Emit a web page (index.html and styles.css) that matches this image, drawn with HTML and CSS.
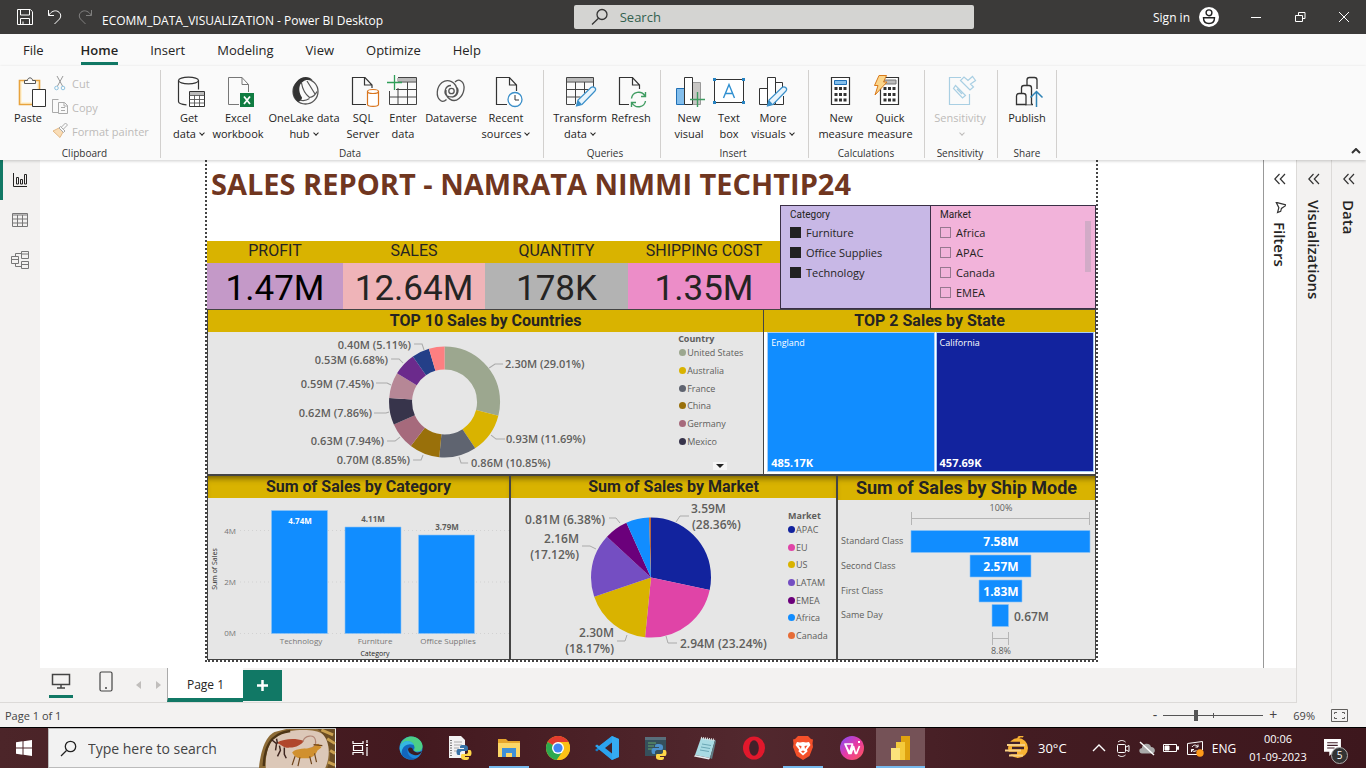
FILE: index.html
```html
<!DOCTYPE html>
<html lang="en">
<head>
<meta charset="utf-8">
<title>ECOMM_DATA_VISUALIZATION - Power BI Desktop</title>
<link rel="stylesheet" href="styles.css">
</head>
<body>
<header class="titlebar">
  <div class="title-left">
    <button class="tb-btn" aria-label="Save"><svg width="16" height="16" viewBox="0 0 16 16"><path d="M.5.500h12.800L15.500 2.700V15.500H.5zM3.500.500V6h9V.500M3.500 15.500V9.500h9v6M6 12.500v3"/></svg></button>
    <button class="tb-btn" aria-label="Undo"><svg width="16" height="16" viewBox="0 0 16 16"><path d="M1.500 1v5.500H7M1.700 6.300C4 2.500 8 .8 11 2.500c3 1.800 3.500 5 1.500 7.500L7.500 15"/></svg></button>
    <button class="tb-btn dim" aria-label="Redo"><svg width="16" height="16" viewBox="0 0 16 16"><path d="M14.500 1v5.500H9M14.300 6.300C12 2.500 8 .8 5 2.500c-3 1.800-3.500 5-1.500 7.500L8.500 15"/></svg></button>
    <span class="title-text">ECOMM_DATA_VISUALIZATION - Power BI Desktop</span>
  </div>
  <label class="title-search">
    <svg width="18" height="18" viewBox="0 0 18 18"><circle cx="11" cy="6.500" r="5"/><path d="M7.500 10.300 1 16.500"/></svg>
    <input type="text" placeholder="Search" aria-label="Search">
  </label>
  <div class="title-right">
    <button class="signin">Sign in
      <svg width="20" height="20" viewBox="0 0 20 20"><circle cx="10" cy="10" r="10" fill="#fff"/><g fill="none" stroke="#222" stroke-width="1.400"><circle cx="10" cy="5.800" r="2.900"/><path d="M4.500 10.700h11c0 3.800-2 5.800-5.500 5.800s-5.500-2-5.500-5.800z"/></g></svg>
    </button>
    <button class="win-btn" aria-label="Minimize"><svg width="12" height="12" viewBox="0 0 12 12"><path d="M1 6.500h10"/></svg></button>
    <button class="win-btn" aria-label="Restore"><svg width="12" height="12" viewBox="0 0 12 12"><path d="M1.500 4.500h7v6h-7zM4.500 4V1.500h6.500v6H9"/></svg></button>
    <button class="win-btn" aria-label="Close"><svg width="12" height="12" viewBox="0 0 12 12"><path d="M1 1l10 10M11 1 1 11"/></svg></button>
  </div>
</header>

<nav class="tabs">
  <a href="#" class="first">File</a><a href="#" class="active">Home</a><a href="#">Insert</a><a href="#">Modeling</a><a href="#">View</a><a href="#">Optimize</a><a href="#">Help</a>
</nav>

<section class="ribbon">
  <div class="group g-clip">
    <div class="tools">
      <button class="tool w40"><svg viewBox="10 75 32 32"><path d="M17.500 80.500h20v24h-20z" fill="#fff3d6" stroke="#e8a33d" stroke-width="1.600"/><path d="M20 83h15v19H20z" fill="#fafafa"/><path d="M22.500 83.500v-3h3c0-3.500 5-3.500 5 0h3v3z" fill="#fafafa" stroke="#555"/><path d="M30.500 89.500h13v17h-13z" fill="#fff" stroke="#333"/></svg><span>Paste</span></button>
      <div class="clip-list">
        <button disabled><svg viewBox="52 75 16 16"><g fill="none"><path d="M57 76l5.500 10M63 76l-5.500 10" stroke="#999"/><circle cx="56.500" cy="88" r="1.800" stroke="#8fc3e0"/><circle cx="63" cy="88" r="1.800" stroke="#8fc3e0"/></g></svg>Cut</button>
        <button disabled><svg viewBox="52 99 16 16"><g fill="#fafafa" stroke="#aaa"><path d="M56 99.500h-3.500v13H58M52.500 99.500h6"/><path d="M58.500 102.500h6l3 3v8h-9zM64 102.500v3.500h3.500M61 107.500h4M61 110.500h4"/></g></svg>Copy</button>
        <button disabled><svg viewBox="52 122 16 16"><g fill="#fafafa"><path d="M53 130l6-3 4 4-3 5.500z" fill="#f9ddb7" stroke="#e5b985"/><path d="M59 127l1.500-1.500 4.500 4.500-1.500 1.500zM61.500 126l4-4 2 2-4 4" stroke="#aaa"/></g></svg>Format painter</button>
      </div>
    </div>
    <div class="glabel">Clipboard</div>
  </div>
  <div class="group g-data">
    <div class="tools">
      <button class="tool w40"><svg viewBox="173 75 32 32"><g fill="none" stroke="#333" stroke-width="1.200"><ellipse cx="188.500" cy="80.500" rx="10" ry="3.300"/><path d="M178.500 80.500v21c0 2 4 3 8 3.300M198.500 80.500v9"/></g><path d="M189.500 91.500h15v15h-15z" fill="#fff" stroke="#333"/><path d="M190 92h14v3h-14z" fill="#bbb"/><path d="M189.500 95.500h15M189.500 99.500h15M189.500 103h15M194.500 95v11M199.500 95v11" stroke="#555" stroke-width=".9"/></svg><span>Get<br>data<i class="chev"></i></span></button>
      <button class="tool w58"><svg viewBox="222 75 32 32"><path d="M239 104.500h-10.500v-27H242l6.500 7V92M242 77.500v7h6.500" fill="none" stroke="#777"/><path d="M240 93h14v14h-14z" fill="#107c41"/><path d="M244 96.500l6 7.500M250 96.500l-6 7.500" stroke="#fff" stroke-width="1.800"/></svg><span>Excel<br>workbook</span></button>
      <button class="tool w74"><svg viewBox="288 75 32 32"><circle cx="305.500" cy="91.500" r="12.500" fill="#fafafa" stroke="#555" stroke-width="1.300"/><path d="M296.500 82c4-6 12.500-6.500 16-2-5.500-1-9 0-12 4-2 4-1.500 9 1.500 13.500 0 2-1.500 4-4 4.500-6-5-6.500-14-1.500-20z" fill="#333"/><path d="M301.500 83c1 6 3.500 11 8 14.500 3.500-.5 6-3 7.500-6M309.500 98.500c-3 2-6.500 2.500-9.500 1.500M307 81l8 13" fill="none" stroke="#555" stroke-width="1.200"/></svg><span>OneLake data<br>hub<i class="chev"></i></span></button>
      <button class="tool w44"><svg viewBox="347 75 32 32"><path d="M366 104.500h-13.500v-27H365l7 7.500V88M364.500 77.500V85h7.500" fill="none" stroke="#333" stroke-width="1.200"/><g fill="#fff" stroke="#d9751e" stroke-width="1.200"><path d="M367.500 91.500v13c0 2.500 11 2.500 11 0v-13"/><ellipse cx="373" cy="91.500" rx="5.500" ry="2"/></g></svg><span>SQL<br>Server</span></button>
      <button class="tool w36"><svg viewBox="387 75 32 32"><path d="M397 78h19v3.500h-19z" fill="#bbb"/><path d="M398 77.500h18.500v27h-27V91M398 82h18.500M396 89.500h20.500M389.500 97h27M398 88v16.500M407.500 82v22.500" fill="none" stroke="#444"/><path d="M394.500 75v15M387 82.500h15" stroke="#2f9e58" stroke-width="1.300"/></svg><span>Enter<br>data</span></button>
      <button class="tool w60"><svg viewBox="435 75 32 32"><g fill="none" stroke="#555" stroke-width="1.300"><circle cx="451.500" cy="91" r="2.700"/><path d="M451 85.500c-6 0-8 8-3.500 10.500 5 2.500 10-.5 9.500-6-.8-8-9-12-15-7.500-5.500 4.500-6.500 14-1.500 18 2 1.500 4.500.5 6-1M452 97c6 0 8-8 3.500-10.500M446 90c-1 8 7 13.500 13 8.500 5.500-4.500 7-14 2-17.500-2-1.500-4.500-.5-6 1"/></g></svg><span>Dataverse<br>&nbsp;</span></button>
      <button class="tool w50"><svg viewBox="490 75 32 32"><path d="M507 104.500h-10.500v-27h13l7 7.500V91M509.500 77.500V85h7" fill="none" stroke="#333" stroke-width="1.200"/><circle cx="515" cy="99.500" r="7" fill="#fff" stroke="#3a8fc9" stroke-width="1.300"/><path d="M515 95v5h4" fill="none" stroke="#333"/></svg><span>Recent<br>sources<i class="chev"></i></span></button>
    </div>
    <div class="glabel">Data</div>
  </div>
  <div class="group g-query">
    <div class="tools">
      <button class="tool w52"><svg viewBox="565 75 32 32"><path d="M567.500 77.500h27v4h-27z" fill="#bbb"/><path d="M576 104.500h-8.500v-27h27V88M567.500 82h27M567.500 89.500h22M567.500 97h14M576.500 82v22M585.500 82v11" fill="none" stroke="#444"/><path d="M577.500 106l1.500-6 13-12.500c2.500-2 6 1 4 3.500L583 104.500z" fill="#e8f4fc" stroke="#3a8fc9" stroke-width="1.200"/><path d="M577.500 106l1.500-6 4 4.500z" fill="#3a8fc9"/></svg><span>Transform<br>data<i class="chev"></i></span></button>
      <button class="tool w50"><svg viewBox="615 75 32 32"><path d="M629 104.500h-9.500v-27h13l7 7.500V89M632.500 77.500V85h7" fill="none" stroke="#333" stroke-width="1.200"/><path d="M631.500 98.500c.8-7 10-8.500 13.500-2.500M645.500 92v4.500H641M645.500 101c-1 6.500-10 8-13.500 2M631.500 107v-4.500h4.500" fill="none" stroke="#3f9c61" stroke-width="1.400"/></svg><span>Refresh<br>&nbsp;</span></button>
    </div>
    <div class="glabel">Queries</div>
  </div>
  <div class="group g-insert">
    <div class="tools">
      <button class="tool w40"><svg viewBox="673 75 32 32"><path d="M676.500 88.500h8v16h-8z" fill="#83beec" stroke="#1f6fb5"/><path d="M692.500 82.500h8v22h-8z" fill="#c8c6c4" stroke="#999"/><path d="M684.500 77.500h8v27h-8z" fill="#fff" stroke="#333"/><path d="M697.500 92v15M690 99.500h15" stroke="#3f9c61" stroke-width="1.400"/></svg><span>New<br>visual</span></button>
      <button class="tool w40"><svg viewBox="713 75 32 32"><path d="M714.500 79.500h29v23h-29z" fill="#fff" stroke="#333"/><path d="M713 78h3v3h-3zM742 78h3v3h-3zM713 101h3v3h-3zM742 101h3v3h-3z" fill="#2683c2"/><path d="M723.500 98l5.500-13.500 5.500 13.500M725.500 93.500h7" fill="none" stroke="#2f8fd0" stroke-width="1.400"/></svg><span>Text<br>box</span></button>
      <button class="tool w48"><svg viewBox="759 75 32 32"><path d="M761.500 88.500h8v16h-8zM769.500 77.500h8v27h-8zM777.500 82.500h7v6M777.500 104.500h8V96" fill="#fff" stroke="#333"/><path d="M769.500 106l1.500-6 13-12.500c2.500-2 6 1 4 3.500L775 104.500z" fill="#e8f4fc" stroke="#3a8fc9" stroke-width="1.200"/><path d="M769.500 106l1.500-6 4 4.500z" fill="#3a8fc9"/></svg><span>More<br>visuals<i class="chev"></i></span></button>
    </div>
    <div class="glabel">Insert</div>
  </div>
  <div class="group g-calc">
    <div class="tools">
      <button class="tool w48"><svg viewBox="825 75 32 32"><path d="M831.500 77.500h18v27h-18z" fill="#fff" stroke="#333" stroke-width="1.200"/><path d="M834.500 80.500h12v4h-12z" fill="#83beec" stroke="#1f6fb5"/><path d="M834.500 88.500h12M834.500 94.500h12M834.500 100h12" stroke="#333" stroke-width="3" stroke-dasharray="3 1.500"/></svg><span>New<br>measure</span></button>
      <button class="tool w50"><svg viewBox="874 75 32 32"><path d="M880.500 77.500h18v27h-18z" fill="#fff" stroke="#333" stroke-width="1.200"/><path d="M884 80h12v4h-12z" fill="#bbb" stroke="#777"/><path d="M883.500 88.500h12M883.500 94.500h12M883.500 100h12" stroke="#333" stroke-width="3" stroke-dasharray="3 1.500"/><path d="M879 75.500h7.500L883.500 82h3.500l-12 13 3-9.500h-3.500z" fill="#fbd58a" stroke="#d97a1c"/></svg><span>Quick<br>measure</span></button>
    </div>
    <div class="glabel">Calculations</div>
  </div>
  <div class="group g-sens">
    <div class="tools">
      <button class="tool w64" disabled><svg viewBox="944 75 32 32"><g fill="#fafafa" stroke="#a9cfe3" stroke-width="1.200"><path d="M961 77.500h-11.500v27h20V94"/><path d="M955.500 85.500l10 10-3 2.500-9-9.500zM957 89l5 5M960.500 80.500l9.500 9.500 3.500-3-3-3 5-3.500-3-4-4.500 4-4-3.500z"/></g></svg><span>Sensitivity<br><i class="chev"></i></span></button>
    </div>
    <div class="glabel">Sensitivity</div>
  </div>
  <div class="group g-share">
    <div class="tools">
      <button class="tool w44"><svg viewBox="1011 75 32 32"><g fill="#fafafa" stroke="#333" stroke-width="1.300"><path d="M1027 104.500V80c0-1.500 1-2.500 2.500-2.500h5c1.500 0 2.500 1 2.500 2.500v9M1033 104.500h-8"/><path d="M1021.500 104.500V88c0-1.500 1-2.500 2.500-2.500h5c1.500 0 2.500 1 2.500 2.500v16.500"/><path d="M1016.500 104.500V96c0-1.500 1-2.500 2.500-2.500h4.500c1.500 0 2.500 1 2.500 2.500v8.500z"/></g><path d="M1036.500 107V91.500M1030.500 97.500l6-6 6 6" fill="none" stroke="#2f83b5" stroke-width="1.500"/></svg><span>Publish<br>&nbsp;</span></button>
    </div>
    <div class="glabel">Share</div>
  </div>
  <button class="collapse" aria-label="Collapse ribbon"><svg width="10" height="6" viewBox="0 0 10 6"><path d="M1 5l4-4 4 4" fill="none" stroke="#333" stroke-width="2"/></svg></button>
</section>

<div class="workspace">
  <div class="center">
    <div class="stage">
      <nav class="rail">
        <button class="on" aria-label="Report view"><svg viewBox="0 0 18 18"><path d="M2.500 2v13.500H16M5.500 6.500h2V13h-2zM9.500 8.500h2V13h-2zM13.500 3.500h2V13h-2z"/></svg></button>
        <button aria-label="Data view"><svg viewBox="0 0 18 18"><path d="M1.500 2.500h15v13h-15zM1.500 4h15M1.500 8h15M1.500 12h15M6.500 4v11.500M11.500 4v11.500"/></svg></button>
        <button aria-label="Model view"><svg viewBox="0 0 18 18"><path d="M10.500.500h7v7h-7zM10.500 3h7M.5 5.500h7v7h-7zM.5 8.500h7M10.500 10.500h7v7h-7zM10.500 13.500h7M4.500 5.500v-3h6M4.500 12.500v3h6"/></svg></button>
      </nav>
      <main class="canvas">
        <article class="report">
          <h1>SALES REPORT - NAMRATA NIMMI TECHTIP24</h1>
          <div class="row-top">
            <div class="kpis">
              <div class="kpi k1"><h2>PROFIT</h2><p>1.47M</p></div>
              <div class="kpi k2"><h2>SALES</h2><p>12.64M</p></div>
              <div class="kpi k3"><h2>QUANTITY</h2><p>178K</p></div>
              <div class="kpi k4"><h2>SHIPPING COST</h2><p>1.35M</p></div>
            </div>
            <fieldset class="slicer s-cat">
              <h3>Category</h3>
              <label><input type="checkbox" checked>Furniture</label>
              <label><input type="checkbox" checked>Office Supplies</label>
              <label><input type="checkbox" checked>Technology</label>
            </fieldset>
            <fieldset class="slicer s-mkt">
              <h3>Market</h3>
              <label><input type="checkbox">Africa</label>
              <label><input type="checkbox">APAC</label>
              <label><input type="checkbox">Canada</label>
              <label><input type="checkbox">EMEA</label>
              <span class="thumb"></span>
            </fieldset>
          </div>
          <div class="row row-mid">
            <section class="card c-country">
              <h2>TOP 10 Sales by Countries</h2>
              <div class="body">
                <svg class="chart" viewBox="208 332 470 142">
                  <g class="ring" transform="rotate(-90 444.500 402)">
                    <circle cx="444.500" cy="402" r="44" pathLength="100" stroke="#9ca78f" stroke-dasharray="29.010 100"/>
                    <circle cx="444.500" cy="402" r="44" pathLength="100" stroke="#d9b300" stroke-dasharray="11.690 100" stroke-dashoffset="-29.010"/>
                    <circle cx="444.500" cy="402" r="44" pathLength="100" stroke="#5f6470" stroke-dasharray="10.850 100" stroke-dashoffset="-40.700"/>
                    <circle cx="444.500" cy="402" r="44" pathLength="100" stroke="#99700a" stroke-dasharray="8.850 100" stroke-dashoffset="-51.550"/>
                    <circle cx="444.500" cy="402" r="44" pathLength="100" stroke="#a66a7c" stroke-dasharray="7.940 100" stroke-dashoffset="-60.400"/>
                    <circle cx="444.500" cy="402" r="44" pathLength="100" stroke="#37344b" stroke-dasharray="7.860 100" stroke-dashoffset="-68.340"/>
                    <circle cx="444.500" cy="402" r="44" pathLength="100" stroke="#b68796" stroke-dasharray="7.450 100" stroke-dashoffset="-76.200"/>
                    <circle cx="444.500" cy="402" r="44" pathLength="100" stroke="#6b2a8c" stroke-dasharray="6.680 100" stroke-dashoffset="-83.650"/>
                    <circle cx="444.500" cy="402" r="44" pathLength="100" stroke="#243f88" stroke-dasharray="5.110 100" stroke-dashoffset="-90.330"/>
                    <circle cx="444.500" cy="402" r="44" pathLength="100" stroke="#fd7f81" stroke-dasharray="4.560 100" stroke-dashoffset="-95.440"/>
                  </g>
                  <path class="leader" d="M503 364h-8l-6 4M505 439h-9l-5-4M468 463h-7l-2-6M414 344h8l2 6M391 359h8l4 4M376 383h11l4 2M374 413h12l3-1M387 441h8l5-4M413 460h8l2-5"/>
                  <g class="dlabel">
                    <text x="505" y="368">2.30M (29.01%)</text>
                    <text x="506" y="443">0.93M (11.69%)</text>
                    <text x="471" y="467">0.86M (10.85%)</text>
                    <g text-anchor="end">
                      <text x="411" y="349">0.40M (5.11%)</text>
                      <text x="388" y="364">0.53M (6.68%)</text>
                      <text x="374" y="388">0.59M (7.45%)</text>
                      <text x="372" y="417">0.62M (7.86%)</text>
                      <text x="384" y="445">0.63M (7.94%)</text>
                      <text x="410" y="464">0.70M (8.85%)</text>
                    </g>
                  </g>
                </svg>
                <div class="legend l-country">
                  <h3>Country</h3>
                  <ul><li class="d1">United States</li><li class="d2">Australia</li><li class="d3">France</li><li class="d4">China</li><li class="d5">Germany</li><li class="d6">Mexico</li></ul>
                  <button class="more" aria-label="More legend items"><svg width="8" height="4" viewBox="0 0 8 4"><path d="M0 0h8L4 4z" fill="#222"/></svg></button>
                </div>
              </div>
            </section>
            <section class="card c-state">
              <h2>TOP 2 Sales by State</h2>
              <div class="treemap">
                <div class="tile t1"><span>England</span><b>485.17K</b></div>
                <div class="tile t2"><span>California</span><b>457.69K</b></div>
              </div>
            </section>
          </div>
          <div class="row row-low">
            <section class="card c-category">
              <h2>Sum of Sales by Category</h2>
              <svg class="chart" viewBox="208 498 301 161">
                <path d="M240 530.500h270M240 582h270M240 633.500h270" stroke="#d2d2d2" stroke-dasharray="1 3"/>
                <g fill="#118dff" stroke="#8ec5f7" stroke-width=".6"><path d="M271.500 510.500h56v123h-56zM345 527h56v106.500h-56zM418.500 535h56v98.500h-56z"/></g>
                <g class="axis"><text x="236" y="534" text-anchor="end">4M</text><text x="236" y="585" text-anchor="end">2M</text><text x="236" y="636" text-anchor="end">0M</text></g>
                <g class="axis" text-anchor="middle"><text x="301" y="644">Technology</text><text x="375" y="644">Furniture</text><text x="448" y="644">Office Supplies</text></g>
                <g class="atitle" text-anchor="middle"><text x="375" y="656">Category</text><text transform="translate(217 569) rotate(-90)">Sum of Sales</text></g>
                <g class="blabel" text-anchor="middle"><text x="300" y="524" class="inv">4.74M</text><text x="373" y="522">4.11M</text><text x="447" y="530">3.79M</text></g>
              </svg>
            </section>
            <section class="card c-market">
              <h2>Sum of Sales by Market</h2>
              <div class="body">
                <svg class="chart" viewBox="511 498 277 161">
                  <g class="pie" transform="rotate(-90 651 577.500)">
                    <circle cx="651" cy="577.500" r="30" pathLength="100" stroke="#12239e" stroke-dasharray="28.360 100"/>
                    <circle cx="651" cy="577.500" r="30" pathLength="100" stroke="#e044a7" stroke-dasharray="23.240 100" stroke-dashoffset="-28.360"/>
                    <circle cx="651" cy="577.500" r="30" pathLength="100" stroke="#d9b300" stroke-dasharray="18.170 100" stroke-dashoffset="-51.600"/>
                    <circle cx="651" cy="577.500" r="30" pathLength="100" stroke="#744ec2" stroke-dasharray="17.120 100" stroke-dashoffset="-69.770"/>
                    <circle cx="651" cy="577.500" r="30" pathLength="100" stroke="#6b007b" stroke-dasharray="6.380 100" stroke-dashoffset="-86.890"/>
                    <circle cx="651" cy="577.500" r="30" pathLength="100" stroke="#118dff" stroke-dasharray="6.200 100" stroke-dashoffset="-93.270"/>
                    <circle cx="651" cy="577.500" r="30" pathLength="100" stroke="#b5653f" stroke-dasharray=".530 100" stroke-dashoffset="-99.470"/>
                  </g>
                  <path class="leader" d="M689 516h-9l-4 6M677 643h-9l-2-7M609 518h7l4 5M582 546h8l6 3M617 641h8l2-6"/>
                  <g class="plabel">
                    <text x="691" y="513">3.59M</text><text x="692" y="529">(28.36%)</text>
                    <text x="680" y="648">2.94M (23.24%)</text>
                    <g text-anchor="end">
                      <text x="605" y="524">0.81M (6.38%)</text>
                      <text x="579" y="543">2.16M</text><text x="579" y="559">(17.12%)</text>
                      <text x="614" y="637">2.30M</text><text x="614" y="653">(18.17%)</text>
                    </g>
                  </g>
                </svg>
                <div class="legend l-market">
                  <h3>Market</h3>
                  <ul><li class="m1">APAC</li><li class="m2">EU</li><li class="m3">US</li><li class="m4">LATAM</li><li class="m5">EMEA</li><li class="m6">Africa</li><li class="m7">Canada</li></ul>
                </div>
              </div>
            </section>
            <section class="card c-ship">
              <h2>Sum of Sales by Ship Mode</h2>
              <svg class="chart" viewBox="838 500 257 159">
                <path d="M911.500 512v13M1089.500 512v13M911 518.500h179M992.500 632v13M1008.500 632v13M992 638.500h17" stroke="#b5b5b5" fill="none"/>
                <g fill="#118dff" stroke="#8ec5f7" stroke-width=".6"><path d="M911 530.500h179v22H911zM970 555h61v22h-61zM979 580h43v22h-43zM992 604.500h16.500v22H992z"/></g>
                <g class="flabel"><text x="841" y="544">Standard Class</text><text x="841" y="569">Second Class</text><text x="841" y="594">First Class</text><text x="841" y="618">Same Day</text></g>
                <g class="flabel" text-anchor="middle"><text x="1001" y="511">100%</text><text x="1001" y="654">8.8%</text></g>
                <g class="plabel"><g class="inv" text-anchor="middle"><text x="1001" y="546">7.58M</text><text x="1001" y="571">2.57M</text><text x="1001" y="596">1.83M</text></g><text x="1014" y="621">0.67M</text></g>
              </svg>
            </section>
          </div>
        </article>
      </main>
      <aside class="pane p-filters">
        <button aria-label="Expand filters"><svg width="12" height="12" viewBox="0 0 12 12"><path d="M5.500 1 .8 6l4.700 5M11 1 6.300 6l4.700 5"/></svg></button>
        <svg class="funnel" width="12" height="12" viewBox="0 0 12 12"><path d="M11.500 1.500H.8l4 4.500v5l2.700-2V6z" transform="rotate(15 6 6)"/></svg>
        <h2>Filters</h2>
      </aside>
    </div>
    <footer class="pagebar">
      <button class="view on" aria-label="Desktop layout"><svg width="20" height="17" viewBox="0 0 20 17"><path d="M1.500 1.500h17v10h-17zM10 12v3M6 15h8" stroke-width="1.500"/></svg></button>
      <button class="view" aria-label="Mobile layout"><svg width="14" height="21" viewBox="0 0 14 21"><rect x="1" y="1" width="12" height="19" rx="1.500"/><path d="M6 17h2" stroke-width="1.500"/></svg></button>
      <button class="step" aria-label="Previous page"><svg width="5" height="8" viewBox="0 0 5 8"><path d="M5 0v8L0 4z"/></svg></button>
      <button class="step" aria-label="Next page"><svg width="5" height="8" viewBox="0 0 5 8"><path d="M0 0v8l5-4z"/></svg></button>
      <button class="ptab">Page 1</button>
      <button class="add" aria-label="New page"><svg width="11" height="11" viewBox="0 0 11 11"><path d="M5.500 0v11M0 5.500h11" stroke="#fff" stroke-width="2.500"/></svg></button>
    </footer>
  </div>
  <aside class="pane"><button aria-label="Expand visualizations"><svg width="12" height="12" viewBox="0 0 12 12"><path d="M5.500 1 .8 6l4.700 5M11 1 6.300 6l4.700 5"/></svg></button><h2>Visualizations</h2></aside>
  <aside class="pane"><button aria-label="Expand data"><svg width="12" height="12" viewBox="0 0 12 12"><path d="M5.500 1 .8 6l4.700 5M11 1 6.300 6l4.700 5"/></svg></button><h2>Data</h2></aside>
</div>

<footer class="status">
  <span>Page 1 of 1</span>
  <div class="zoom">
    <button aria-label="Zoom out">-</button>
    <input type="range" min="0" max="100" value="32" aria-label="Zoom">
    <button aria-label="Zoom in">+</button>
    <span class="pct">69%</span>
    <button aria-label="Fit to page"><svg width="17" height="13" viewBox="0 0 17 13"><path d="M.5.500h16v12H.5zM3.500 5V3.500H6M11 3.500h2.500V5M3.500 8v1.500H6M11 9.500h2.500V8" fill="none" stroke="#605e5c"/></svg></button>
  </div>
</footer>

<div class="taskbar">
  <button class="start" aria-label="Start"><svg width="16" height="16" viewBox="0 0 16 16"><path d="M0 2.200 6.500 1.300v6.200H0zM7.500 1.200 16 0v7.500H7.500zM0 8.500h6.500v6.200L0 13.800zM7.500 8.500H16V16l-8.500-1.200z" fill="#fff"/></svg></button>
  <div class="wsearch">
    <label>
      <svg width="17" height="17" viewBox="0 0 17 17"><circle cx="10.500" cy="6.500" r="5.200"/><path d="M6.500 10.500 1 16"/></svg>
      <input type="text" placeholder="Type here to search" aria-label="Type here to search">
    </label>
    <svg class="cave" viewBox="0 0 78 40"><path d="M0 40C1 28 5 8 16 3l12-3h50v40z" fill="#8d6b36"/><path d="M60 0h18v40h-8C76 26 72 10 60 0z" fill="#6b4d24"/><path d="M64 1l12 5M70 10l8 5M73 22l5 3M71 34l7 3" stroke="#c9a050" stroke-width="3"/><path d="M7 40C6 28 10 12 18 6 30 0 58-1 65 5c7 6 9 22 3 35z" fill="#dcc8b8"/><path d="M5 38c0-10 3-22 9-28 6-6 12-7 18-8" fill="none" stroke="#4d3515" stroke-width="2.500"/><path d="M18 14c8-4 18-5 28-2-2 4-8 7-14 7-6 1-9-3-14-5z" fill="#b0472d"/><path d="M45 13c2-7 12-8 13-1 1 5-3 8-7 8" fill="none" stroke="#b08474" stroke-width="1.200"/><path d="M13 11l5 4-1 7M18 10l1 5M21 17l1 5-3 6M26 19v7l2 4" fill="none" stroke="#3f2620" stroke-width="1.500"/><path d="M34 24c5-5 14-3 20-5 3-1 4-4 7-4l3 4-4 3c-2 5-6 8-11 8-6 0-11 1-15-6z" fill="#d0902f"/><path d="M37 28l-3 9M42 29l-2 9M52 28l2 8M57 25l2 9M56 16l9 1" fill="none" stroke="#6d4218" stroke-width="1.200"/></svg>
  </div>
  <button class="app tv" aria-label="Task View"><svg width="18" height="16" viewBox="0 0 18 16"><path d="M1 1v2.500h10V1M1 15v-2.500h10V15M1.500 5.500h9v5h-9zM15 0v3M15 7v9" fill="none" stroke="#fff" stroke-width="1.200"/><path d="M14 4h2v2h-2z" fill="#fff"/></svg></button>
  <button class="app" aria-label="Edge"><svg viewBox="0 0 24 24"><circle cx="12" cy="12" r="11.500" fill="#1c86d8"/><path d="M1 10C3 3 8 .5 12.500.500 19 .5 24 6 23.500 11c-.5 4-4 5.500-8 4-1-.5-.3-1.500 0-2.500C15.500 8 8 5 1 10z" fill="#4ccf86"/><path d="M1 10C5 3 14 4 15.500 11c0 1-1 2-1 3-2-3-6-3-6 1 0 4 4 8 9.500 7.500C8 26-1 19 1 10z" fill="#1266bd"/><path d="M1 10C4 3 13 4 15 9 9 7 5 9 3 14 2 17 3 19 4 20 1 17 .3 13 1 10z" fill="#35b8e0"/><path d="M9 13c2-3 5-1 5 1 2 3 6 3 9 1-2 4-5 5-8 4-4-1-6-3-6-6z" fill="#3c1d22"/></svg></button>
  <button class="app" aria-label="Python file"><svg viewBox="0 0 24 24"><path d="M1 0h12l4 4v18H1z" fill="#f2f2f2"/><path d="M3 4v16" stroke="#777" stroke-width="2" stroke-dasharray="1 1.500"/><path d="M6 6h8M6 9h8M6 12h5M6 15h4" stroke="#aaa"/><path d="M15 9c-3 0-3 1-3 3h4v1h-6c-2 0-2 6 0 6h2v-2c0-1 1-2 2-2h4c2 0 2-1 2-3s-1-3-5-3z" fill="#3673a8"/><path d="M18 24c3 0 3-1 3-3h-4v-1h5c2 0 2-6 0-6h-2v2c0 1-1 2-2 2h-4c-1 0-1 1-1 3s1 3 5 3z" fill="#ffd748"/></svg></button>
  <button class="app open" aria-label="File Explorer"><svg viewBox="0 0 24 24"><path d="M1 3h8l2 2h12v16H1z" fill="#e6a52c"/><path d="M1 7h22v14H1z" fill="#fcd667"/><path d="M5 12h14v9h-4v-4H9v4H5z" fill="#3f8fd8"/></svg></button>
  <button class="app" aria-label="Chrome"><svg viewBox="0 0 24 24"><circle cx="12" cy="12" r="12" fill="#fbc116"/><path d="M12 12 1.600 6A12 12 0 0 1 22.400 6z" fill="#e33b2e"/><path d="M1.600 6A12 12 0 0 0 10.500 23.900L17.200 15 12 12z" fill="#2da94f"/><path d="M12 6h10.400A12 12 0 0 1 11 24l6-9z" fill="#fbc116"/><circle cx="12" cy="12" r="6" fill="#fff"/><circle cx="12" cy="12" r="4.600" fill="#4285f4"/></svg></button>
  <button class="app" aria-label="Visual Studio Code"><svg viewBox="0 0 24 24"><path d="M17 0l7 3v18l-7 3L4 13.500 2 15.500l-2-1.500L17 0z" fill="#1480cc"/><path d="M17 24 0 10l2-1.500 2 1.500L17 0z" fill="#2ca3ee"/><path d="M17 6.500v11L10 12z" fill="#42212a"/><path d="M17 0l7 3v18l-7 3z" fill="#35abf2"/></svg></button>
  <button class="app" aria-label="Python IDLE"><svg viewBox="0 0 24 24"><path d="M1 1h21v19H1z" fill="#35505c"/><path d="M1 1h21v3H1z" fill="#596f7b"/><path d="M4 7h8M4 10h6M4 13h4" stroke="#67a56b"/><path d="M14 8c-3 0-3 1-3 3h4v1H9c-2 0-2 6 0 6h2v-2c0-1 1-2 2-2h4c2 0 2-1 2-3s-1-3-5-3z" fill="#4c91cc"/><path d="M17 24c3 0 3-1 3-3h-4v-1h5c2 0 2-6 0-6h-2v2c0 1-1 2-2 2h-4c-1 0-1 1-1 3s1 3 5 3z" fill="#ffd748"/></svg></button>
  <button class="app" aria-label="Notepad"><svg viewBox="0 0 24 24"><path d="M8 2l14 2-5 18-15-3z" fill="#a9dbe3"/><path d="M17 22l5-18 1 1-4 18z" fill="#607d86"/><path d="M2 19l15 3-1 1.500L1 20.500z" fill="#e8eef0"/><path d="M8 2l14 2" stroke="#ddd" stroke-width="2.500" stroke-dasharray="1 1"/><path d="M9 8l9 1.500M8 11l9 1.500M7 14l9 1.500" stroke="#6aa7b5"/></svg></button>
  <button class="app" aria-label="Opera"><svg viewBox="0 0 24 24"><ellipse cx="12" cy="12" rx="11" ry="11.500" fill="#e1182c"/><ellipse cx="12" cy="12" rx="4.800" ry="7.800" fill="#42212a"/></svg></button>
  <button class="app open" aria-label="Brave"><svg viewBox="0 0 24 24"><path d="M7 0h10l3 3 2 .5-.5 4L22 11l-3.500 9-6.500 4-6.500-4L2 11l.5-3.500L2 3.500 4 3z" fill="#f4502a"/><path d="M6 6l3 .5 3-.5 3 .5 3-.5 1.500 3-3.500 4.500.5 2-4.500 4-4.500-4 .5-2L4.500 9z" fill="#fff"/><path d="M7.500 9.500l3 .5-.5 3zM16.500 9.500l-3 .5.500 3zM10 15.500l2-1 2 1-2 1.500z" fill="#f4502a"/></svg></button>
  <button class="app" aria-label="WPS Office"><svg viewBox="0 0 24 24"><defs><linearGradient id="wps" x2="1" y2="1"><stop offset="0" stop-color="#7d4dff"/><stop offset=".5" stop-color="#e63aa5"/><stop offset="1" stop-color="#ff5757"/></linearGradient></defs><circle cx="12" cy="12" r="12" fill="url(#wps)"/><path d="M5 8h7.500l-3 9zL9 17.500h2l2.500-7 2 7h1L19.500 10" fill="none" stroke="#fff" stroke-width="1.700" stroke-linejoin="round"/><path d="M18 5h2v2h-2z" fill="#fff"/></svg></button>
  <button class="app open current" aria-label="Power BI Desktop"><svg viewBox="0 0 24 24"><path d="M12 0h9v24h-9z" fill="#dfa30f"/><path d="M7 6h9v18H7z" fill="#f5cb3b"/><path d="M2 12h9v12H2z" fill="#fbe27b"/></svg></button>
  <div class="tray">
    <button class="weather"><svg width="26" height="24" viewBox="0 0 26 24"><circle cx="14" cy="12" r="10" fill="#f9b233"/><path d="M14 2c2-2 4-2 5-1" stroke="#f9b233" stroke-width="2"/><path d="M2 7h14M8 12h12M2 17h11" stroke="#42212a" stroke-width="2.500"/><path d="M3 9h18M1 14.500h16M5 19.500h14" stroke="#f7cf84" stroke-width="2"/></svg>30°C</button>
    <button aria-label="Show hidden icons"><svg viewBox="0 0 18 18"><path d="M3 12l6-6 6 6" stroke-width="1.400"/></svg></button>
    <button aria-label="Camera"><svg viewBox="0 0 18 18"><rect x="3.500" y="5.500" width="8" height="8" rx="1"/><path d="M12 8l3-1.500v6L12 11M4 3c2.500-2 5-2 7.500 0M4 16c2.500 2 5 2 7.500 0"/></svg></button>
    <button aria-label="OneDrive"><svg viewBox="0 0 18 18"><path d="M4 14.500c-3 0-4-5 0-5.500 0-5 8-6 9-1 5 0 5 6.500 1 6.500z" fill="#aaa" stroke="none"/><path d="M2 3l14 13" stroke-width="1.500"/></svg></button>
    <button aria-label="Battery"><svg viewBox="0 0 18 18"><path d="M1.500 5.500h13v7h-13zM15.500 7.500h1v3h-1z"/><path d="M3 7h4v4H3z" fill="#fff"/></svg></button>
    <button aria-label="Updates"><svg viewBox="0 0 18 18"><path d="M11 15.500H1.500v-11l15-2V11M6 8c2-3 5-2 6 0M12 5.500V8H9.500M10.500 11.500c-2 1.500-4 1-5-1M5.500 13v-2.500H8"/><circle cx="14" cy="14" r="3.700" fill="#ff9b1a" stroke="none"/></svg></button>
    <button class="lang">ENG</button>
    <button class="clock">00:06<br>01-09-2023</button>
    <button class="notif" aria-label="Notifications, 5 new"><svg width="17" height="17" viewBox="0 0 17 17"><path d="M0 0h16v12h-7l-4 4v-4H0z" fill="#fff"/><path d="M3 3.500h10M3 6h10M3 8.500h7" stroke="#42212a"/></svg><span>5</span></button>
  </div>
</div>
</body>
</html>
```
FILE: styles.css
```css
* { box-sizing: border-box; }
body {
  margin: 0;
  min-height: 100vh;
  display: flex;
  flex-direction: column;
  font-family: "Open Sans", "Noto Sans", sans-serif;
  font-size: 12px;
  color: #252423;
  background: #fff;
}
button {
  font: inherit;
  color: inherit;
  background: none;
  border: 0;
  padding: 0;
  margin: 0;
}
h1, h2, h3, p, ul { margin: 0; padding: 0; }
svg { display: block; flex: none; }

/* Title bar */
.titlebar {
  display: grid;
  grid-template-columns: 42% minmax(200px, 400px) 1fr;
  align-items: center;
  height: 34px;
  background: #3b3a39;
  color: #fff;
}
.title-left { display: flex; align-items: center; padding-left: 17px; gap: 14px; white-space: nowrap; }
.tb-btn svg, .win-btn svg { fill: none; stroke: #fff; }
.tb-btn.dim { opacity: .35; }
.title-text { padding-top: 6px; margin-left: -5px; }
.title-search {
  display: flex;
  align-items: center;
  gap: 11px;
  height: 24px;
  padding-left: 17px;
  border-radius: 2px;
  background: #d4d4d2;
}
.title-search svg { fill: none; stroke: #333; stroke-width: 1.300; }
.title-search input { flex: 1; min-width: 0; border: 0; background: none; padding: 0; font: 13px "Open Sans", sans-serif; }
.title-search input::placeholder { color: #33614f; opacity: 1; }
.title-right { display: flex; justify-content: flex-end; align-items: center; }
.signin { display: flex; align-items: center; gap: 9px; margin-right: 15px; }
.win-btn { width: 44px; height: 34px; display: grid; place-items: center; }

/* Ribbon */
.tabs { display: flex; height: 32px; padding-left: 7px; background: #fafafa; font-size: 13px; }
.tabs a { color: #252423; text-decoration: none; margin: 0 16px; padding-top: 7px; height: 31px; line-height: 18px; }
.tabs .first { margin-right: 21px; }
.tabs .active { font-weight: 600; border-bottom: 3px solid #117865; }
.ribbon {
  display: flex;
  position: relative;
  z-index: 1;
  padding-top: 4px;
  background: #fafafa;
  box-shadow: 0 1px 3px rgba(0, 0, 0, .2);
  font-size: 11px;
}
.group {
  display: flex;
  flex-direction: column;
  justify-content: space-between;
  height: 90px;
  padding: 0 8px;
  background: linear-gradient(#d2d0ce, #d2d0ce) right top / 1px 88px no-repeat;
}
.g-clip { width: 161px; padding-right: 0; }
.g-data { padding-right: 13px; }
.g-query { padding: 0 5px 0 10px; }
.g-insert { padding-right: 12px; }
.g-calc { padding-right: 10px; }
.g-sens { padding: 0 6px 0 3px; }
.g-share { padding: 0 8px 0 7px; }
.tools { display: flex; padding-top: 5px; }
.tool { display: flex; flex-direction: column; align-items: center; line-height: 16px; white-space: nowrap; }
.tool svg { width: 32px; height: 32px; margin-bottom: 3px; overflow: visible; }
.tool:disabled { color: #bdbbb9; }
.w36 { width: 36px; } .w40 { width: 40px; } .w44 { width: 44px; } .w48 { width: 48px; }
.w50 { width: 50px; } .w52 { width: 52px; } .w58 { width: 58px; } .w60 { width: 60px; }
.w64 { width: 64px; } .w74 { width: 74px; }
.chev {
  display: inline-block;
  width: 4px;
  height: 4px;
  margin: 0 1px 3px 4px;
  border: solid currentColor;
  border-width: 0 1px 1px 0;
  transform: rotate(45deg);
}
.clip-list { display: flex; flex-direction: column; margin: -4px 0 0 4px; }
.clip-list button { display: flex; align-items: center; gap: 4px; height: 24px; color: #bdbbb9; white-space: nowrap; }
.clip-list svg { width: 16px; height: 16px; }
.glabel { text-align: center; font-size: 10px; line-height: 14px; color: #333; }
.collapse { margin: auto 5px 6px auto; }

/* Workspace */
.workspace { display: flex; flex: 1; background: #f3f2f1; }
.center { flex: 1; min-width: 0; display: flex; flex-direction: column; }
.stage { flex: 1; display: flex; background: #fff; }
.rail { width: 40px; background: #f3f2f1; }
.rail button { display: grid; place-items: center; width: 40px; height: 40px; }
.rail button.on { box-shadow: inset 3px 0 #117865; }
.rail svg { width: 18px; height: 18px; fill: none; stroke: #777; }
.rail .on svg { stroke: #252423; }
.canvas { flex: 1; min-width: 0; display: flex; justify-content: center; align-items: flex-start; }
.pane {
  width: 35px;
  display: flex;
  flex-direction: column;
  align-items: center;
  border-left: 1px solid #dcdad8;
  padding-top: 13px;
}
.pane svg { fill: none; stroke: #333; stroke-width: 1.200; }
.pane h2 { writing-mode: vertical-rl; font-size: 15px; font-weight: 600; line-height: 18px; margin-top: 15px; }
.p-filters { width: 33px; border-color: #999; }
.p-filters .funnel { margin-top: 17px; }
.p-filters h2 { margin-top: 8px; }

/* Report */
.report {
  width: 100%;
  max-width: 893px;
  margin-bottom: 6px;
  border: dotted #444;
  border-width: 0 2px 2px;
}
.report h1 { height: 45px; padding-left: 4px; font-size: 29px; line-height: 47px; color: #70361f; white-space: nowrap; }
.row-top { display: grid; grid-template-columns: 573fr 151fr 165fr; height: 104px; }
.kpis { display: flex; align-items: flex-end; text-align: center; font-family: Roboto, sans-serif; }
.kpi h2 { font-size: 16px; font-weight: 400; line-height: 20px; height: 22px; background: #d9b300; }
.kpi p { font-size: 35px; line-height: 52px; height: 46px; }
.k1 { flex: 136; } .k2 { flex: 142; } .k3 { flex: 143; } .k4 { flex: 152; }
.k1 p { background: #c499c8; color: #000; } .k2 p { background: #efb4b8; }
.k3 p { background: #b3b3b3; } .k4 p { background: #ec8dc8; }
.slicer { position: relative; margin: 0; min-width: 0; padding: 3px 0 0 9px; border: 1px solid #3a2f45; font-size: 11px; }
.s-cat { background: #c8b8e6; }
.s-mkt { background: #f2b3da; border-left: 0; }
.slicer h3 { font: 10px/12px Roboto, sans-serif; padding-bottom: 1px; }
.slicer label { display: flex; align-items: center; gap: 5px; height: 20px; }
.slicer input { appearance: none; width: 11px; height: 11px; margin: 0; border: 1px solid #96788f; }
.slicer input:checked { background: #222; border-color: #222; }
.thumb { position: absolute; right: 4px; top: 15px; width: 6px; height: 51px; background: #d2abc7; }

.row { display: flex; }
.card { min-width: 0; border: 1px solid #444; border-left-width: 0; background: #e6e6e6; }
.card:first-child { border-left-width: 1px; }
.card > h2 {
  font: 700 16px/22px Roboto, sans-serif;
  text-align: center;
  background: #d9b300;
  white-space: nowrap;
}
.c-country { flex: 557; } .c-state { flex: 332; background: #fff; }
.row-low { display: grid; grid-template-columns: 304fr 327fr 258fr; }
.row-low .card { border-right-width: 2px; }
.row-low .card:last-child { border-right-width: 1px; }
.row-low .card > h2 { box-shadow: inset 0 6px 6px -4px rgba(60, 45, 0, .7); }
.row-low .c-ship > h2 { font-size: 18px; line-height: 24px; }
.body { display: flex; }
.chart { width: 100%; height: auto; flex: 1; min-width: 0; }
.ring circle { fill: none; stroke-width: 23; }
.pie circle { fill: none; stroke-width: 60; }
.leader { fill: none; stroke: #aaa; }
.dlabel { font-size: 11px; font-weight: 600; fill: #605e5c; }
.plabel { font-size: 12px; font-weight: 600; fill: #605e5c; }
.blabel { font-size: 8px; font-weight: 700; fill: #605e5c; }
.chart .inv { fill: #fff; font-weight: 700; }
.axis { font-size: 8px; fill: #777; }
.atitle { font-size: 7px; fill: #252423; }
.flabel { font-size: 9px; fill: #605e5c; }
.legend { color: #605e5c; font-size: 9px; }
.legend h3 { font-size: 9px; line-height: 12px; }
.legend ul { list-style: none; display: flex; flex-direction: column; }
.legend li { flex: 1; display: flex; align-items: center; gap: 1px; white-space: nowrap; }
.legend li::before { content: ""; width: 7px; height: 7px; border-radius: 50%; background: var(--c); }
.l-country { width: 85px; padding-top: 1px; }
.l-country ul { height: 106px; margin-top: -1px; padding-left: 1px; }
.l-market { width: 48px; padding-top: 12px; }
.l-market ul { height: 123px; margin-top: -1px; }
.more { display: block; margin: 12px 0 0 35px; padding: 2px 3px; background: #f5f5f5; }
.d1 { --c: #9ca78f; } .d2 { --c: #d9b300; } .d3 { --c: #5f6470; } .d4 { --c: #99700a; } .d5 { --c: #a66a7c; } .d6 { --c: #37344b; }
.m1 { --c: #12239e; } .m2 { --c: #e044a7; } .m3 { --c: #d9b300; } .m4 { --c: #744ec2; } .m5 { --c: #6b007b; } .m6 { --c: #118dff; } .m7 { --c: #e66c37; }
.treemap { display: grid; grid-template-columns: 168fr 159fr; height: 142px; padding: 0 1px 2px 3px; gap: 1px; }
.tile { display: flex; flex-direction: column; justify-content: space-between; padding: 3px; border: 1px solid #a9cef5; color: #fff; font-size: 9px; }
.tile b { font-size: 11px; line-height: 10px; }
.t1 { background: #118dff; }
.t2 { background: #12239e; }

/* Page bar */
.pagebar { display: flex; align-items: stretch; height: 35px; padding-left: 38px; border-bottom: 1px solid #dcdad8; background: #f3f2f1; }
.view { width: 24px; margin: 0 10px 4px 11px; display: grid; place-items: center; border-bottom: 3px solid transparent; }
.view.on { border-color: #117865; }
.view svg { fill: none; stroke: #444; stroke-width: 1.200; }
.step { width: 20px; display: grid; place-items: center; }
.step svg { fill: #c0bebc; }
.ptab { width: 76px; padding-top: 3px; margin-left: -1px; background: #fff; border-bottom: 4px solid #117865; border-left: 1px solid #aaa; font-size: 12px; }
.add { width: 39px; margin: 2px 0 1px; background: #117865; display: grid; place-items: center; }

/* Status bar */
.status { display: flex; align-items: center; justify-content: space-between; height: 24px; padding: 0 18px 0 5px; background: #f3f2f1; font-size: 11px; color: #444; }
.zoom { display: flex; align-items: center; gap: 6px; }
.zoom button { font-size: 14px; line-height: 20px; }
.pct { margin: 0 10px; }
.zoom input {
  appearance: none;
  width: 100px;
  height: 14px;
  margin: 0;
  background:
    linear-gradient(#555, #555) 50px 5px / 1px 5px no-repeat,
    linear-gradient(#555, #555) 0 7px / 100% 1px no-repeat;
}
.zoom input::-webkit-slider-thumb { appearance: none; width: 4px; height: 11px; background: #555; }

/* Taskbar */
.taskbar { display: flex; height: 41px; border-top: 1px solid #000; background: linear-gradient(90deg, #4c2529, #43191f 30%, #52282e 55%, #431c22 75%, #3d171d); color: #fff; }
.start { width: 48px; display: grid; place-items: center; }
.wsearch { display: flex; width: 288px; background: #f2f2f2; border: 1px solid #bbb; border-right: 0; }
.wsearch label { flex: 1; min-width: 0; display: flex; align-items: center; gap: 11px; padding-left: 11px; }
.wsearch label svg { fill: none; stroke: #222; stroke-width: 1.300; }
.wsearch input { flex: 1; min-width: 0; border: 0; padding: 0; background: none; font: 14px "Open Sans", sans-serif; }
.wsearch input::placeholder { color: #444; opacity: 1; }
.cave { width: 78px; height: 39px; }
.app { width: 49px; display: grid; place-items: center; }
.app svg { width: 24px; height: 24px; }
.tv { width: 50px; }
.tv svg { width: 18px; height: 16px; }
.open { background: linear-gradient(#76b9ed, #76b9ed) center bottom / 40px 2px no-repeat; }
.current { background: linear-gradient(#76b9ed, #76b9ed) center bottom / 100% 2px no-repeat, #755257; }
.tray { margin-left: auto; display: flex; align-items: center; padding-right: 5px; }
.tray button { width: 24px; display: grid; place-items: center; }
.tray svg { width: 18px; height: 18px; fill: none; stroke: #fff; }
.tray .weather { width: 83px; display: flex; align-items: center; gap: 8px; font-size: 13px; }
.tray .weather svg { width: 26px; height: 24px; stroke: none; }
.tray .lang { width: 34px; font-size: 12px; }
.tray .clock { width: 74px; display: block; font-size: 11px; line-height: 18px; text-align: center; white-space: nowrap; }
.tray .notif { position: relative; width: 46px; height: 40px; padding-right: 10px; }
.tray .notif svg { stroke: none; }
.notif span { position: absolute; left: 16px; top: 19px; width: 17px; height: 17px; border: 1px solid #aaa; border-radius: 50%; background: #333; font-size: 10px; line-height: 15px; }
```
